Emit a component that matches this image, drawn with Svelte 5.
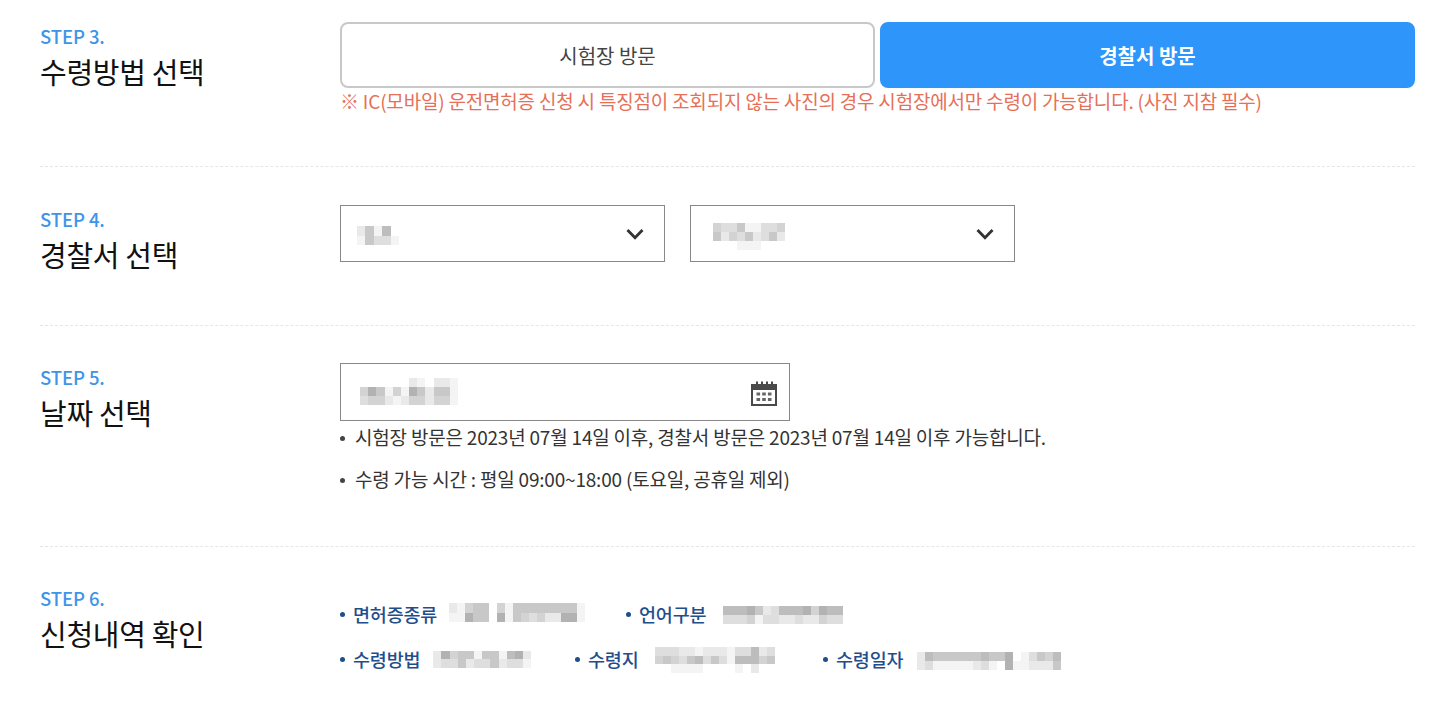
<script>
  const shade = (c) => `rgb(${[0,1,2].map(() => 255 - (+c) * 11).join(',')})`;
  const mosaics = {
    a: ['25160', '15331'],
    b: ['433511334', '524352352', '000111000'],
    c: ['000000210221', '475141752551', '344212442441'],
    d: ['21455041555555551', '11755071543422771'],
    e: ['666752366674766', '333413322322433'],
    f: ['274551551672', '233523352331'],
    g: ['3332212221336230', '4543563531666450', '0011110000102000'],
    h: ['265555556557013546', '231111123107112225']
  };
</script>

{#snippet mosaic(key, cls)}
  <span class="mosaic {cls}" style:grid-template-columns={`repeat(${mosaics[key][0].length}, 1fr)`}>
    {#each mosaics[key] as row}
      {#each row.split('') as c}
        <i style:background={shade(c)}></i>
      {/each}
    {/each}
  </span>
{/snippet}

{#snippet chevron()}
  <svg class="chev" viewBox="0 0 18 12" width="18" height="12"><path d="M1.5 2l7.5 7.8L16.5 2" fill="none" stroke="#333" stroke-width="2.8"/></svg>
{/snippet}

<main class="page">
  <section class="row first">
    <div class="head"><p class="step">STEP 3.</p><h2>수령방법 선택</h2></div>
    <div class="body">
      <div class="choices">
        <button class="choice">시험장 방문</button>
        <button class="choice on">경찰서 방문</button>
      </div>
      <p class="warn">※ IC(모바일) 운전면허증 신청 시 특징점이 조회되지 않는 사진의 경우 시험장에서만 수령이 가능합니다. (사진 지참 필수)</p>
    </div>
  </section>

  <section class="row r4">
    <div class="head"><p class="step">STEP 4.</p><h2>경찰서 선택</h2></div>
    <div class="body selects">
      <div class="select">{@render mosaic('a', 'm-a')}{@render chevron()}</div>
      <div class="select">{@render mosaic('b', 'm-b')}{@render chevron()}</div>
    </div>
  </section>

  <section class="row r5">
    <div class="head"><p class="step">STEP 5.</p><h2>날짜 선택</h2></div>
    <div class="body">
      <div class="date">
        {@render mosaic('c', 'm-c')}
        <svg class="cal" viewBox="0 0 26 25" width="26" height="25">
          <path d="M0 3h26v6H0z" fill="#4a4a4a"/>
          <path d="M5 0.5h2v4H5zM10 0.5h2v4h-2zM15 0.5h2v4h-2zM20 0.5h2v4h-2z" fill="#4a4a4a"/>
          <path d="M1 8h24v16H1z" fill="none" stroke="#4a4a4a" stroke-width="2"/>
          <path d="M5.5 11.5h3.6v3H5.5zM11.2 11.5h3.6v3h-3.6zM16.9 11.5h3.6v3h-3.6zM5.5 17h3.6v3H5.5zM11.2 17h3.6v3h-3.6zM16.9 17h3.6v3h-3.6z" fill="#666"/>
        </svg>
      </div>
      <ul class="notes">
        <li>시험장 방문은 2023년 07월 14일 이후, 경찰서 방문은 2023년 07월 14일 이후 가능합니다.</li>
        <li>수령 가능 시간 : 평일 09:00~18:00 (토요일, 공휴일 제외)</li>
      </ul>
    </div>
  </section>

  <section class="row r6">
    <div class="head"><p class="step">STEP 6.</p><h2>신청내역 확인</h2></div>
    <div class="body summary">
      <div class="line l1">
        <span class="item i1"><b>면허증종류</b>{@render mosaic('d', 'm-d')}</span>
        <span class="item"><b>언어구분</b>{@render mosaic('e', 'm-e')}</span>
      </div>
      <div class="line l2">
        <span class="item i2"><b>수령방법</b>{@render mosaic('f', 'm-f')}</span>
        <span class="item i3"><b>수령지</b>{@render mosaic('g', 'm-g')}</span>
        <span class="item"><b>수령일자</b>{@render mosaic('h', 'm-h')}</span>
      </div>
    </div>
  </section>
</main>

<style>
  :global(body) { margin: 0; background: #fff; }
  .page {
    width: 1375px;
    margin-left: 40px;
    font-family: "Noto Sans CJK KR", "Noto Sans", sans-serif;
    color: #333;
  }
  .row { display: flex; border-bottom: 1px dashed #e4e6e8; box-sizing: border-box; }
  .first { height: 167px; padding-top: 22px; }
  .r4 { height: 159px; padding-top: 38px; }
  .r5 { height: 221px; padding-top: 37px; }
  .r6 { border-bottom: 0; height: 169px; padding-top: 37px; }
  .head { width: 300px; flex: none; }
  .step { margin: 0; padding-top: 2px; font-size: 18.5px; line-height: 24px; color: #3d94e8; font-weight: 500; letter-spacing: -0.1px; }
  h2 { margin: 3px 0 0; font-size: 29px; line-height: 40px; font-weight: 400; color: #111; letter-spacing: -0.3px; }
  .body { flex: 1; min-width: 0; }
  .choices { display: flex; gap: 5px; }
  .choice {
    flex: 1; height: 66px; border-radius: 8px; border: 2px solid #c8c8c8; background: #fff;
    font: 400 20px "Noto Sans CJK KR", sans-serif; color: #444; padding: 0;
  }
  .choice.on { background: #2e96fb; border-color: #2e96fb; color: #fff; font-weight: 700; }
  .warn { margin: 0; font-size: 19px; line-height: 26px; color: #e76f57; letter-spacing: -0.2px; white-space: nowrap; }
  .selects { display: flex; gap: 25px; }
  .select {
    width: 325px; height: 57px; box-sizing: border-box; border: 1px solid #888; display: flex; align-items: center; justify-content: space-between;
    padding: 0 20px 0 16px;
  }
  .date {
    width: 450px; height: 58px; box-sizing: border-box; border: 1px solid #888; display: flex; align-items: center; justify-content: space-between;
    padding: 0 12px 0 19px;
  }
  .notes { list-style: none; margin: 0; padding: 0; font-size: 19px; line-height: 26px; color: #333; letter-spacing: -0.2px; }
  .notes li { position: relative; padding-left: 15px; margin-top: 3px; white-space: nowrap; }
  .notes li + li { margin-top: 16px; }
  .notes li::before { content: ""; position: absolute; left: 0; top: 12px; width: 5px; height: 5px; border-radius: 50%; background: #444; }
  .summary { padding-top: 18px; }
  .line { display: flex; align-items: center; height: 24px; }
  .l2 { margin-top: 21px; }
  .item { display: flex; align-items: center; }
  .item b { position: relative; padding-left: 13px; font-size: 18.5px; font-weight: 500; color: #1f4e8c; letter-spacing: -0.2px; line-height: 24px; }
  .item b::before { content: ""; position: absolute; left: 0; top: 10px; width: 5px; height: 5px; border-radius: 50%; background: #1f4e8c; }
  .i1 { width: 286px; }
  .i2 { width: 235px; }
  .i3 { width: 248px; }
  .mosaic { display: inline-grid; grid-auto-rows: 1fr; filter: blur(0.7px); flex: none; }
  .mosaic i { display: block; }
  .m-a { width: 42px; height: 19px; margin-right: auto; margin-top: 4px; }
  .m-b { width: 72px; height: 27px; margin-right: auto; margin-left: 6px; margin-top: 6px; }
  .m-c { width: 98px; height: 27px; margin-top: -2px; }
  .m-d { width: 136px; height: 19px; margin-left: 12px; margin-top: -3px; }
  .m-e { width: 120px; height: 18px; margin-left: 17px; margin-top: 2px; }
  .m-f { width: 98px; height: 17px; margin-left: 13px; }
  .m-g { width: 128px; height: 26px; margin-left: 17px; margin-top: 2px; }
  .m-h { width: 144px; height: 18px; margin-left: 14px; margin-top: 4px; }
  .chev, .cal { flex: none; }
  .cal { margin-top: 2px; }
</style>
